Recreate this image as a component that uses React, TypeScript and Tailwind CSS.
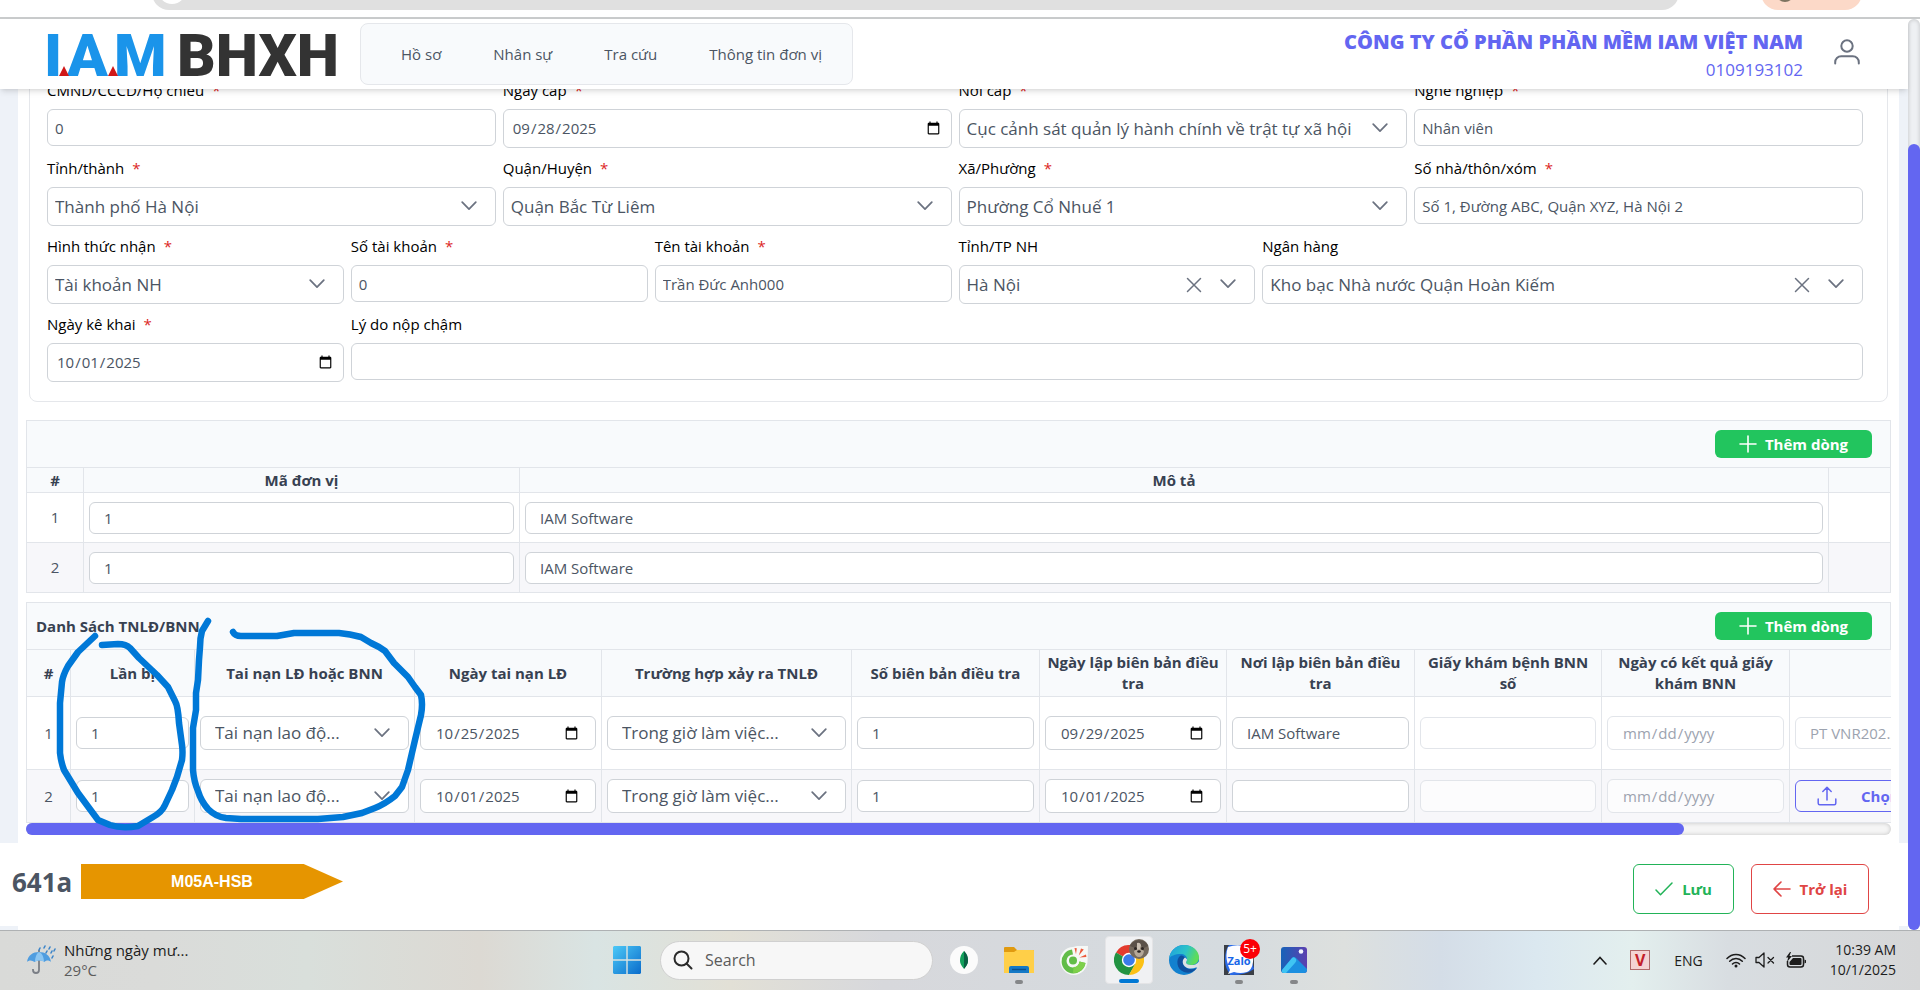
import type { ReactNode } from "react";
import { clsx } from "clsx";

const BORDER = "border-[#e2e5ea]";
const CONTROL = "w-full rounded-md border border-[#cfd3d8] text-[#4b5563] outline-none";

function Chevron({ className }: { className?: string }) {
  return (
    <svg viewBox="0 0 16 10" className={clsx("pointer-events-none h-[10px] w-4 text-[#6b7280]", className)} fill="none" stroke="currentColor" strokeWidth="1.7" strokeLinecap="round" strokeLinejoin="round">
      <path d="M1.2 1.2 8 8.2l6.800-7" />
    </svg>
  );
}

function Plus() {
  return (
    <svg viewBox="0 0 18 18" className="h-[18px] w-[18px]" stroke="currentColor" strokeWidth="1.6" strokeLinecap="round">
      <path d="M9 1v16M1 9h16" />
    </svg>
  );
}

/* ---------- form ---------- */

interface FieldProps {
  id: string;
  label: string;
  required?: boolean;
  span: string;
  children: ReactNode;
}

function Field({ id, label, required, span, children }: FieldProps) {
  return (
    <div className={span}>
      <label htmlFor={id} className="mb-[9px] block h-5 text-[15px] leading-5 text-black">
        {label}
        {required && <span className="ml-2 text-[#dc2626]">*</span>}
      </label>
      {children}
    </div>
  );
}

function TextInput({ id, value }: { id: string; value: string }) {
  return <input id={id} type="text" defaultValue={value} className={clsx(CONTROL, "block h-[37px] bg-white px-[7px] text-[15px]")} />;
}

function DateInput({ id, value }: { id: string; value: string }) {
  return <input id={id} type="date" defaultValue={value} className={clsx(CONTROL, "block h-[39px] bg-white px-2 text-[15px]")} />;
}

function SelectInput({ id, value, clearable }: { id: string; value: string; clearable?: boolean }) {
  return (
    <div className="relative">
      <select id={id} className={clsx(CONTROL, "block h-[39px] appearance-none bg-white pr-12 pl-[7px] text-[17px]")}>
        <option>{value}</option>
      </select>
      {clearable && (
        <button type="button" aria-label="Xóa" className="absolute top-3 right-[53px] text-[#6b7280]">
          <svg viewBox="0 0 16 16" className="h-4 w-4" stroke="currentColor" strokeWidth="1.500" strokeLinecap="round">
            <path d="M1.500 1.500l13 13M14.500 1.500l-13 13" />
          </svg>
        </button>
      )}
      <Chevron className="absolute top-[14px] right-[19px]" />
    </div>
  );
}

/* ---------- table cells ---------- */

interface CellProps {
  label: string;
  value?: string;
  disabled?: boolean;
}

const CELL_CONTROL = clsx(CONTROL, "block bg-white disabled:border-[#e2e5ea] disabled:bg-white/60 disabled:text-[#9ca3af]");

function CellText({ label, value, disabled }: CellProps) {
  return (
    <input
      type="text"
      aria-label={label}
      defaultValue={value}
      disabled={disabled}
      className={clsx(CELL_CONTROL, "h-8 px-[14px] text-[15px]")}
    />
  );
}

function CellDate({ label, value, disabled }: CellProps) {
  return (
    <input
      type="date"
      aria-label={label}
      defaultValue={value}
      disabled={disabled}
      className={clsx(CELL_CONTROL, "h-[34px] px-[14px] text-[15px]")}
    />
  );
}

function CellSelect({ label, value }: CellProps) {
  return (
    <div className="relative">
      <select aria-label={label} className={clsx(CELL_CONTROL, "h-[34px] appearance-none pr-10 pl-[14px] text-[17px]")}>
        <option>{value}</option>
      </select>
      <Chevron className="absolute top-3 right-[19px]" />
    </div>
  );
}

function TableBar({ title }: { title?: string }) {
  return (
    <div className={clsx("flex h-12 items-center justify-between border bg-[#f8fafc] pr-[18px] pl-[9px]", BORDER)}>
      <h2 className="text-[15px] font-bold text-[#374151]">{title}</h2>
      <button type="button" className="flex h-7 w-[157px] items-center justify-center gap-2 rounded-md bg-[#22c55e] text-[15px] font-bold text-white">
        <Plus />
        Thêm dòng
      </button>
    </div>
  );
}

const UNITS = [
  { code: "1", description: "IAM Software" },
  { code: "1", description: "IAM Software" },
];

const ACCIDENT_COLUMNS = [
  { title: "#", width: "w-[44px]" },
  { title: "Lần bị", width: "w-[124px]" },
  { title: "Tai nạn LĐ hoặc BNN", width: "w-[220px]" },
  { title: "Ngày tai nạn LĐ", width: "w-[187px]" },
  { title: "Trường hợp xảy ra TNLĐ", width: "w-[250px]" },
  { title: "Số biên bản điều tra", width: "w-[188px]" },
  { title: "Ngày lập biên bản điều tra", width: "w-[187px]" },
  { title: "Nơi lập biên bản điều tra", width: "w-[188px]" },
  { title: "Giấy khám bệnh BNN số", width: "w-[187px]" },
  { title: "Ngày có kết quả giấy khám BNN", width: "w-[188px]" },
  { title: "", width: "w-[339px]" },
];

const ACCIDENTS = [
  { date: "2025-10-25", reportDate: "2025-09-29", place: "IAM Software", file: "PT VNR202..." },
  { date: "2025-10-01", reportDate: "2025-10-01", place: "", file: null },
];

function UnitTable() {
  const cell = clsx("border px-[5px]", BORDER);
  return (
    <section>
      <TableBar />
      <table className="-mt-px w-full table-fixed border-collapse text-[15px] text-[#4b5563]">
        <colgroup>
          <col className="w-[57px]" />
          <col className="w-[436px]" />
          <col />
          <col className="w-[62px]" />
        </colgroup>
        <thead>
          <tr className="h-[25px] bg-[#f8fafc] leading-5 text-[#374151]">
            <th className={cell}>#</th>
            <th className={cell}>Mã đơn vị</th>
            <th className={cell}>Mô tả</th>
            <th className={cell}></th>
          </tr>
        </thead>
        <tbody>
          {UNITS.map((unit, i) => (
            <tr key={i} className={clsx("h-[50px]", i % 2 === 1 && "bg-[#f7f7fa]")}>
              <td className={clsx(cell, "text-center")}>{i + 1}</td>
              <td className={cell}>
                <CellText label="Mã đơn vị" value={unit.code} />
              </td>
              <td className={cell}>
                <CellText label="Mô tả" value={unit.description} />
              </td>
              <td className={cell}></td>
            </tr>
          ))}
        </tbody>
      </table>
    </section>
  );
}

function AccidentTable() {
  const cell = clsx("border px-[5px]", BORDER);
  return (
    <section className="relative">
      <TableBar title="Danh Sách TNLĐ/BNN" />
      <div className="-mt-px overflow-hidden">
        <table className="w-[2102px] table-fixed border-collapse text-[15px] text-[#4b5563]">
          <colgroup>
            {ACCIDENT_COLUMNS.map((col, i) => (
              <col key={i} className={col.width} />
            ))}
          </colgroup>
          <thead>
            <tr className="h-[47px] bg-[#f8fafc] leading-[21px] text-[#374151]">
              {ACCIDENT_COLUMNS.map((col, i) => (
                <th key={i} className={clsx("border px-1", BORDER)}>
                  {col.title}
                </th>
              ))}
            </tr>
          </thead>
          <tbody>
            {ACCIDENTS.map((row, i) => (
              <tr key={i} className={i % 2 === 0 ? "h-[73px]" : "h-[53px] bg-[#f7f7fa]"}>
                <td className={clsx(cell, "text-center")}>{i + 1}</td>
                <td className={cell}>
                  <CellText label="Lần bị" value="1" />
                </td>
                <td className={cell}>
                  <CellSelect label="Tai nạn LĐ hoặc BNN" value="Tai nạn lao độ..." />
                </td>
                <td className={cell}>
                  <CellDate label="Ngày tai nạn LĐ" value={row.date} />
                </td>
                <td className={cell}>
                  <CellSelect label="Trường hợp xảy ra TNLĐ" value="Trong giờ làm việc..." />
                </td>
                <td className={cell}>
                  <CellText label="Số biên bản điều tra" value="1" />
                </td>
                <td className={cell}>
                  <CellDate label="Ngày lập biên bản điều tra" value={row.reportDate} />
                </td>
                <td className={cell}>
                  <CellText label="Nơi lập biên bản điều tra" value={row.place} />
                </td>
                <td className={cell}>
                  <CellText label="Giấy khám bệnh BNN số" disabled />
                </td>
                <td className={cell}>
                  <CellDate label="Ngày có kết quả giấy khám BNN" disabled />
                </td>
                <td className={cell}>
                  {row.file ? (
                    <CellText label="Tệp đính kèm" value={row.file} disabled />
                  ) : (
                    <button type="button" className="flex h-8 w-full items-center gap-6 rounded-md border border-[#6366f1] pl-[21px] font-bold text-[#6366f1]">
                      <svg viewBox="0 0 20 20" className="h-5 w-5" fill="none" stroke="currentColor" strokeWidth="1.500" strokeLinecap="round" strokeLinejoin="round">
                        <path d="M10 14V1.500M5.800 5.500 10 1.300l4.200 4.200M1.200 13v4.200c0 .9.600 1.500 1.500 1.500h14.600c.9 0 1.500-.6 1.500-1.500V13" />
                      </svg>
                      Chọn tệp
                    </button>
                  )}
                </td>
              </tr>
            ))}
          </tbody>
        </table>
      </div>
      <div className="h-3 rounded-full bg-[#f5f5f5] shadow-[inset_0_0_4px_rgba(0,0,0,0.2)]">
        <div className="h-3 w-8/9 rounded-full bg-[#6366f1]" />
      </div>

      {/* pen marks */}
      <svg viewBox="26 602 420 240" className="pointer-events-none absolute top-0 left-0 h-[240px] w-[420px]" fill="none" stroke="#0078d7" strokeWidth="6.500" strokeLinecap="round" strokeLinejoin="round">
        <path d="M95 636 78 652 68 666Q63 675 62 682L60 703V753Q61 762 64 770L78 793 98 820 110 825Q122 829 138 826L153 817Q162 812 165 805L172 790 177 777 182 760Q183 752 182 745L179 723Q178 706 175 701L168 687 157 675 139 658 130 648Q126 644 118 644L102 645" />
        <path d="M208 621 202 631Q200 638 200 647L199 660 198 680 196 693V710L193 728V770Q194 782 198 791 201 801 208 809 216 817 226 818L241 819H318L343 817 362 813 375 808Q385 804 395 796L402 787 408 770 415 740 421 715Q423 704 421 695L415 687 408 677 394 663 385 651 379 647 371 643 361 637Q350 634 339 633H294L277 636H241Q235 636 233 632" />
      </svg>
    </section>
  );
}

/* ---------- header / footer ---------- */

function Logo() {
  return (
    <svg viewBox="0 0 289 70" className="h-[70px] w-[289px] overflow-visible" role="img" aria-label="I.A.M BHXH">
      <g fontFamily="Roboto, sans-serif" fontWeight="900" fontSize="60">
        <g fill="#1a94ea">
          <text x="-3" y="57">I</text>
          <text x="20" y="57">A</text>
          <text x="67" y="57">M</text>
        </g>
        <text x="130" y="57" fill="#333333">
          BHXH
        </text>
      </g>
      <path d="M12 57l5-10 5 10zM61 57l5-10 5 10z" fill="#d01818" />
    </svg>
  );
}

function Header() {
  return (
    <header className="relative z-10 flex h-[70px] shrink-0 items-center bg-white pr-12 pl-[47px] shadow-md">
      <a href="#home">
        <Logo />
      </a>
      <nav className="ml-6 flex h-[62px] items-center gap-[52px] rounded-lg border border-[#e5e7eb] bg-[#f8fafc] pr-[30px] pl-10 text-[15px] text-[#4b5563]">
        <a href="#ho-so">Hồ sơ</a>
        <a href="#nhan-su">Nhân sự</a>
        <a href="#tra-cuu">Tra cứu</a>
        <a href="#don-vi">Thông tin đơn vị</a>
      </nav>
      <div className="ml-auto pt-[3px] text-right text-[#6366f1]">
        <p className="text-xl leading-7 font-extrabold">CÔNG TY CỔ PHẦN PHẦN MỀM IAM VIỆT NAM</p>
        <p className="text-[17px] leading-7">0109193102</p>
      </div>
      <button type="button" aria-label="Tài khoản" className="mb-1 ml-[31px] text-[#6b7280]">
        <svg viewBox="0 0 26 26" className="h-[26px] w-[26px]" fill="none" stroke="currentColor" strokeWidth="2" strokeLinecap="round">
          <circle cx="13" cy="7" r="5.700" />
          <path d="M1.200 24.500v-1.200c0-3.400 2.600-6 6-6h11.600c3.400 0 6 2.600 6 6v1.200" />
        </svg>
      </button>
    </header>
  );
}

function ActionBar() {
  return (
    <footer className="flex h-[83px] shrink-0 items-start bg-white pt-[21px] pr-[39px] pl-3">
      <span className="w-[69px] text-[26px] leading-9 font-bold text-[#4b5563]">641a</span>
      <div className="flex h-[35px] w-[262px] items-center bg-[#e69500] [clip-path:polygon(0_0,85%_0,100%_50%,85%_100%,0_100%)]">
        <span className="flex-1 text-center font-['Liberation_Sans'] text-base font-bold text-white">M05A-HSB</span>
      </div>
      <div className="ml-auto flex gap-[17px] text-[15px] font-bold">
        <button type="button" className="flex h-[50px] w-[101px] items-center justify-center gap-[9px] rounded-md border border-[#22b358] text-[#22b358]">
          <svg viewBox="0 0 18 14" className="h-[14px] w-[18px]" fill="none" stroke="currentColor" strokeWidth="1.500" strokeLinecap="round" strokeLinejoin="round">
            <path d="M1 8l4.500 4.800L17 1" />
          </svg>
          Lưu
        </button>
        <button type="button" className="flex h-[50px] w-[118px] items-center justify-center gap-[9px] rounded-md border border-[#e04545] text-[#e04545]">
          <svg viewBox="0 0 18 16" className="h-4 w-[18px]" fill="none" stroke="currentColor" strokeWidth="1.600" strokeLinecap="round" strokeLinejoin="round">
            <path d="M17 8H1M8 1 1 8l7 7" />
          </svg>
          Trở lại
        </button>
      </div>
    </footer>
  );
}

/* ---------- desktop taskbar ---------- */

function TaskbarApp({ name, running, active, children }: { name: string; running?: boolean; active?: boolean; children: ReactNode }) {
  return (
    <button
      type="button"
      aria-label={name}
      className={clsx("relative flex h-12 w-12 items-center justify-center rounded", active && "border border-[#e4e4e6] bg-[#f0f1f3]")}
    >
      {children}
      {running && <span className="absolute bottom-0 h-1 w-2 rounded-full bg-[#858789]" />}
      {active && <span className="absolute bottom-0 h-1 w-5 rounded-full bg-[#0078d4]" />}
    </button>
  );
}

function WeatherIcon() {
  return (
    <svg viewBox="0 0 30 30" className="h-[30px] w-[30px]">
      <path d="M13 5v20c0 4-6 4-6 0v-1" fill="none" stroke="#7b7f86" strokeWidth="1.800" />
      <path d="M1 17C2 10 7 7 13 7s11 3 12 10c-2-2-5-2-6.500 0-2-2-8-2-10 0C6 15 3 15 1 17z" fill="#4f9de0" />
      <path d="M9 17c0-5 2-9 4-10 3 1 5 5 5 10-2-2-7-2-9 0z" fill="#8cc6f2" />
      <path d="M14 3l-1 2M19 1l-1 2M24 2l-1 2M21 6l-1 2M26 6l-1 2M29 4l-1 2M27 11l-1 2" stroke="#3e86c9" strokeWidth="1.600" strokeLinecap="round" />
    </svg>
  );
}

function WindowsIcon() {
  return (
    <svg viewBox="0 0 30 30" className="h-[30px] w-[30px]">
      <defs>
        <linearGradient id="win" x1="0" y1="0" x2="1" y2="1" gradientUnits="objectBoundingBox">
          <stop offset="0" stopColor="#4cc9f7" />
          <stop offset="1" stopColor="#0a6ccb" />
        </linearGradient>
      </defs>
      <path d="M2 1h12.300v13.300H1V2zM15.700 1H28l1 1v12.300H15.700zM1 15.700h13.300V29H2l-1-1zM15.700 15.700H29V28l-1 1H15.700z" fill="url(#win)" />
    </svg>
  );
}

function FolderIcon() {
  return (
    <svg viewBox="0 0 30 28" className="h-7 w-[30px]">
      <path d="M0 2Q0 1 1 1h9l3 3h16q1 0 1 1v5H0z" fill="#e09a10" />
      <path d="M0 6h10l3-2h16q1 0 1 1v22H0z" fill="#ffcf48" />
      <path d="M5 27v-5q0-2 2-2h16q2 0 2 2v5z" fill="#1579c6" />
      <path d="M8 23.500h14" stroke="#0b4f8c" strokeWidth="1.400" />
    </svg>
  );
}

function MongoIcon() {
  return (
    <svg viewBox="0 0 30 30" className="h-[30px] w-[30px]">
      <circle cx="15" cy="15" r="14" fill="#fbfbfb" />
      <path d="M15 6c3 3 4 6 4 9.500 0 4-2.500 6-3.500 8h-1c-1-2-3.500-4-3.500-8C11 12 12 9 15 6z" fill="#12a15c" />
      <path d="M15 6c3 3 4 6 4 9.500 0 4-2.500 6-3.500 8H15z" fill="#0a5f43" />
    </svg>
  );
}

function CocCocIcon() {
  return (
    <svg viewBox="0 0 30 30" className="h-[30px] w-[30px]">
      <path d="M14 2C7 2 1 8 1 15.500S7 30 14.500 30 28 24 28.500 17l.500-16H18z" fill="#f6f8f6" />
      <path d="M13 4.500a12 12 0 1 0 13.500 13.500L20.500 16.500A6.500 6.500 0 1 1 14 9.500z" fill="#62bd48" />
      <path d="M14 28a12 12 0 0 0 12.500-10L20.500 16.500C20 20 18 22 14.500 22z" fill="#7ed04b" />
      <circle cx="14" cy="15.500" r="4" fill="#62bd48" />
      <path d="M15.500 3l2.300.3-.8 6zM22 3.500l2.800 1-5 6zM27 9.500l.4 2.400-7 .6z" fill="#ee5a3c" />
    </svg>
  );
}

function ChromeIcon() {
  return (
    <>
      <svg viewBox="0 0 30 30" className="h-[30px] w-[30px]">
        <path d="M15 15 2 7.500A15 15 0 0 1 28 7.500L27 8H15z" fill="#e33b2e" />
        <path d="M15 15 2 7.500A15 15 0 0 0 15 30l6.500-11z" fill="#229342" />
        <path d="M28 7.500A15 15 0 0 1 15 30l6.300-11.500L15 8h13z" fill="#fbc116" />
        <circle cx="15" cy="15" r="7.200" fill="#fff" />
        <circle cx="15" cy="15" r="5.800" fill="#3b7bea" />
      </svg>
      <svg viewBox="0 0 20 20" className="absolute top-[2px] right-[3px] h-5 w-5">
        <circle cx="10" cy="10" r="10" fill="#74695d" />
        <path d="M1 7c3-7 15-8 18 0l-4 2-5-4-4 4z" fill="#5a5149" />
        <path d="M8 4q3-1 4 2l-1 5H8z" fill="#c9bfb2" />
        <path d="M5 12q5-4 10 0-1 6-5 6t-5-6z" fill="#b5a898" />
        <circle cx="6.500" cy="9.500" r="1.500" fill="#2b2623" />
        <circle cx="13.500" cy="9.500" r="1.500" fill="#2b2623" />
        <ellipse cx="10" cy="12.500" rx="1.800" ry="1.200" fill="#2a2422" />
      </svg>
    </>
  );
}

function EdgeIcon() {
  return (
    <svg viewBox="0 0 30 30" className="h-[30px] w-[30px]">
      <defs>
        <linearGradient id="edgeTop" x1="0" y1="0" x2="1" y2="0.300">
          <stop offset="0" stopColor="#1f9fe0" />
          <stop offset="0.600" stopColor="#2cc3c8" />
          <stop offset="1" stopColor="#5ddc5a" />
        </linearGradient>
      </defs>
      <circle cx="15" cy="15" r="15" fill="#1281cf" />
      <path d="M0 14C1 5 8 0 15 0c9 0 15 6 15 12.500 0 5-4 7.500-8 7.500-3 0-5-1-5-2.500 0-1 1-1.500 1-3.500 0-3-3-5-6-5C6 9 1 11 0 14z" fill="url(#edgeTop)" />
      <path d="M11 11c-4 3-4 13 4 16 5 2 10 0 13-4-7 3-14 0-14-6 0-2 1-3 2-4-1-2-3-3-5-2z" fill="#0f4f9e" />
      <path d="M16 12.500c-2 1.500-2.500 3-2.200 5.500C15 23 21 25 27 22.500h3v-6c-2 3-5 3.500-8 3.500s-5-1-5-2.500c0-1 1-1.500 1-3.300z" fill="#dde0e4" />
    </svg>
  );
}

function ZaloIcon() {
  return (
    <>
      <span className="relative flex h-[30px] w-[30px] items-center justify-center bg-[#2a6be8]">
        <svg viewBox="0 0 30 30" className="absolute inset-0 h-[30px] w-[30px]">
          <path d="M0 0h5Q1 5 1 15q0 8 5 14v1H0zM24 0h6v30H8q14 0 22-6z" fill="#3b3f46" />
          <path d="M4 2q11-4 22 1 4 5 3 14-1 8-6 10-7 2-13 0l-6 2 2-4Q0 12 4 2z" fill="#fdfdff" />
        </svg>
        <span className="relative text-[11px] leading-none font-bold text-[#1565e8]">Zalo</span>
      </span>
      <span className="absolute top-[3px] right-[3px] flex h-5 w-5 items-center justify-center rounded-full bg-[#fb0007] text-xs text-white">5+</span>
    </>
  );
}

function PhotosIcon() {
  return (
    <svg viewBox="0 0 26 26" className="h-[26px] w-[26px]">
      <defs>
        <linearGradient id="photoBg" x1="0" y1="0" x2="1" y2="0">
          <stop offset="0" stopColor="#1763b8" />
          <stop offset="1" stopColor="#5c3fb0" />
        </linearGradient>
      </defs>
      <rect width="26" height="26" rx="3" fill="url(#photoBg)" />
      <path d="M1 23 11 11q2-2 4 0l11 11v1q0 3-3 3H3q-2 0-2-3z" fill="#1c8fe0" />
      <path d="M1 23 11 11q2-2 4 1 1 2-1 4L5 26H3q-3 0-2-3z" fill="#3fc4f3" />
      <circle cx="20" cy="4.500" r="2.300" fill="#f2f4ff" />
    </svg>
  );
}

function Taskbar() {
  return (
    <div className="grid h-[60px] shrink-0 grid-cols-[1fr_auto_1fr] items-center border-t border-[#aeb1b3] bg-[linear-gradient(90deg,#d9dad8_0%,#dadbd9_8%,#d9dfdb_16%,#dcd9d3_25%,#d9e4e3_31%,#e2e0d6_38%,#d7d8dc_46%,#d5dbdf_64%,#dde0de_70%,#d4dde7_75%,#dbe8f0_80%,#e3efee_85%,#d8dde1_90%,#d6d7d8_100%)] pb-px">
      <div className="flex items-center gap-2 pl-[26px] text-[#1c1c1c]">
        <WeatherIcon />
        <div className="text-[15px] leading-5">
          <p>Những ngày mư...</p>
          <p className="text-[#5c5c5c]">29°C</p>
        </div>
      </div>

      <div className="ml-[10px] flex items-center">
        <button type="button" aria-label="Start" className="mr-[18px]">
          <WindowsIcon />
        </button>
        <label className="mr-[7px] flex h-[39px] w-[273px] items-center gap-3 rounded-full border border-[#d0d0d0] bg-[#f7f7f7] pl-3">
          <svg viewBox="0 0 20 20" className="h-5 w-5" fill="none" stroke="#2a2a2a" strokeWidth="2" strokeLinecap="round">
            <circle cx="8.500" cy="8.500" r="7" />
            <path d="M13.500 13.500 18.500 18.500" />
          </svg>
          <input type="text" aria-label="Search" placeholder="Search" className="w-40 bg-transparent text-base outline-none placeholder:text-[#5b5b5b]" />
        </label>
        <div className="flex items-center gap-[7px]">
          <TaskbarApp name="MongoDB Compass">
            <MongoIcon />
          </TaskbarApp>
          <TaskbarApp name="File Explorer" running>
            <FolderIcon />
          </TaskbarApp>
          <TaskbarApp name="Cốc Cốc">
            <CocCocIcon />
          </TaskbarApp>
          <TaskbarApp name="Chrome" active>
            <ChromeIcon />
          </TaskbarApp>
          <TaskbarApp name="Edge">
            <EdgeIcon />
          </TaskbarApp>
          <TaskbarApp name="Zalo" running>
            <ZaloIcon />
          </TaskbarApp>
          <TaskbarApp name="Photos" running>
            <PhotosIcon />
          </TaskbarApp>
        </div>
      </div>

      <div className="flex items-center justify-end pr-6 text-[14px] text-[#1c1c1c]">
        <svg viewBox="0 0 14 9" className="mr-[23px] h-[9px] w-[14px]" fill="none" stroke="currentColor" strokeWidth="1.600" strokeLinecap="round">
          <path d="M1 8l6-6.500L13 8" />
        </svg>
        <span className="mr-6 flex h-5 w-5 items-center justify-center border border-[#b06a6a] bg-[#f4d3d3] text-base leading-none font-bold text-[#c3202a]">V</span>
        <span className="mr-[23px]">ENG</span>
        <svg viewBox="0 0 20 15" className="mr-[9px] h-[15px] w-5" fill="none" stroke="currentColor" strokeWidth="1.500" strokeLinecap="round">
          <path d="M1 5.500C6 0 14 0 19 5.500M3.700 8.300c3.500-3.700 9.100-3.700 12.600 0M6.500 11c2-2 5-2 7 0" />
          <circle cx="10" cy="13" r="1.500" fill="currentColor" stroke="none" />
        </svg>
        <svg viewBox="0 0 20 16" className="mr-[11px] h-4 w-5" fill="none" stroke="currentColor" strokeWidth="1.300" strokeLinecap="round" strokeLinejoin="round">
          <path d="M1 5.500v5h3L9 15V1L4 5.500zM13 5.500l5.500 5.500M18.500 5.500 13 11" />
        </svg>
        <svg viewBox="0 0 20 16" className="mr-6 h-4 w-5">
          <path d="M6 4h9q2.500 0 2.500 2.500v6Q17.500 15 15 15H4q-2.500 0-2.500-2.500V9" fill="none" stroke="currentColor" strokeWidth="1.500" />
          <path d="M7 6h7.500q1 0 1 1v5q0 1-1 1h-10q-1 0-1-1v-2zM18.500 7.500l1.500.7v2.600l-1.500.7zM4 0 0 5.500h2.200L1 10l5-6H3.500L5 0z" fill="currentColor" />
        </svg>
        <div className="text-right leading-5">
          <p>10:39 AM</p>
          <p>10/1/2025</p>
        </div>
      </div>
    </div>
  );
}

/* ---------- page ---------- */

export default function App() {
  return (
    <div className="flex h-screen flex-col overflow-hidden bg-white font-['Open_Sans','Noto_Sans',sans-serif]">
      {/* bottom edge of the browser toolbar */}
      <div className="flex h-[19px] shrink-0 items-end overflow-hidden border-b-2 border-[#c9cbcc] pr-[58px] pb-[7px] pl-[152px]">
        <div className="flex h-[34px] flex-1 items-end rounded-full bg-[#e0e0e0] pb-[6px] pl-[6px]">
          <div className="h-7 w-7 rounded-full bg-white" />
        </div>
        <div className="ml-[82px] flex h-[34px] w-[101px] items-end rounded-full bg-[#fcd9c8] pb-2 pl-[15px]">
          <div className="h-[18px] w-[18px] rounded-full bg-[#7d7460]" />
        </div>
      </div>

      <div className="flex min-h-0 flex-1">
        <div className="flex min-w-0 flex-1 flex-col bg-[#eef2f8]">
          <Header />
          <main className="min-h-0 flex-1 overflow-hidden pr-[9px] pl-[18px]">
            <div className="bg-white pr-2 pb-2 pl-2">
              <form className="-mt-[10px] mr-[3px] ml-[3px] grid grid-cols-12 gap-x-[7px] gap-y-[10px] rounded-b-lg border border-[#e5e7eb] pr-6 pb-[19px] pl-[17px]">
                <Field id="cccd" label="CMND/CCCD/Hộ chiếu" required span="col-span-3">
                  <TextInput id="cccd" value="0" />
                </Field>
                <Field id="ngay-cap" label="Ngày cấp" required span="col-span-3">
                  <DateInput id="ngay-cap" value="2025-09-28" />
                </Field>
                <Field id="noi-cap" label="Nơi cấp" required span="col-span-3">
                  <SelectInput id="noi-cap" value="Cục cảnh sát quản lý hành chính về trật tự xã hội" />
                </Field>
                <Field id="nghe" label="Nghề nghiệp" required span="col-span-3">
                  <TextInput id="nghe" value="Nhân viên" />
                </Field>

                <Field id="tinh" label="Tỉnh/thành" required span="col-span-3">
                  <SelectInput id="tinh" value="Thành phố Hà Nội" />
                </Field>
                <Field id="quan" label="Quận/Huyện" required span="col-span-3">
                  <SelectInput id="quan" value="Quận Bắc Từ Liêm" />
                </Field>
                <Field id="xa" label="Xã/Phường" required span="col-span-3">
                  <SelectInput id="xa" value="Phường Cổ Nhuế 1" />
                </Field>
                <Field id="so-nha" label="Số nhà/thôn/xóm" required span="col-span-3">
                  <TextInput id="so-nha" value="Số 1, Đường ABC, Quận XYZ, Hà Nội 2" />
                </Field>

                <Field id="hinh-thuc" label="Hình thức nhận" required span="col-span-2">
                  <SelectInput id="hinh-thuc" value="Tài khoản NH" />
                </Field>
                <Field id="so-tk" label="Số tài khoản" required span="col-span-2">
                  <TextInput id="so-tk" value="0" />
                </Field>
                <Field id="ten-tk" label="Tên tài khoản" required span="col-span-2">
                  <TextInput id="ten-tk" value="Trần Đức Anh000" />
                </Field>
                <Field id="tinh-nh" label="Tỉnh/TP NH" span="col-span-2">
                  <SelectInput id="tinh-nh" value="Hà Nội" clearable />
                </Field>
                <Field id="ngan-hang" label="Ngân hàng" span="col-span-4">
                  <SelectInput id="ngan-hang" value="Kho bạc Nhà nước Quận Hoàn Kiếm" clearable />
                </Field>

                <Field id="ngay-ke-khai" label="Ngày kê khai" required span="col-span-2">
                  <DateInput id="ngay-ke-khai" value="2025-10-01" />
                </Field>
                <Field id="ly-do" label="Lý do nộp chậm" span="col-span-10">
                  <TextInput id="ly-do" value="" />
                </Field>
              </form>

              <div className="mt-[18px] flex flex-col gap-[9px]">
                <UnitTable />
                <AccidentTable />
              </div>
            </div>
          </main>
          <ActionBar />
          <div className="h-1 shrink-0 pr-[9px] pl-[18px]">
            <div className="h-1 bg-white" />
          </div>
        </div>

        {/* page scrollbar */}
        <div className="w-3 rounded-full bg-[#eef0f3] pt-[125px] shadow-[inset_0_0_4px_rgba(0,0,0,0.2)]">
          <div className="h-full rounded-full bg-[#6366f1]" />
        </div>
      </div>

      <Taskbar />
    </div>
  );
}
